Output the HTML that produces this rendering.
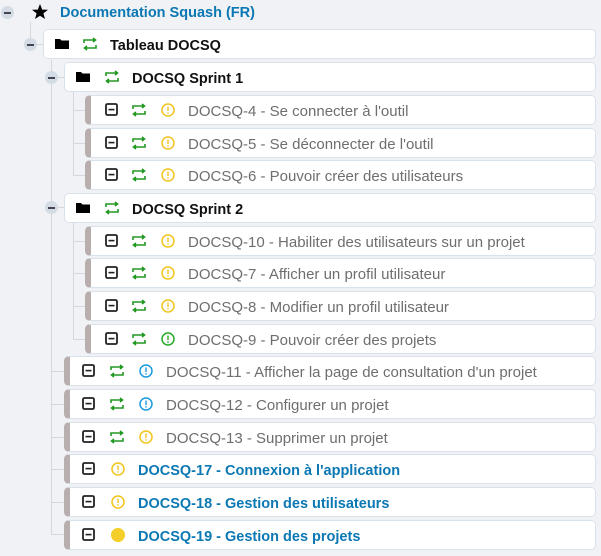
<!DOCTYPE html>
<html><head><meta charset="utf-8"><style>
*{margin:0;padding:0;box-sizing:border-box}
body{width:601px;height:556px;background:#f1f2f6;position:relative;overflow:hidden;font-family:"Segoe UI","Liberation Sans",sans-serif}
.c{position:absolute;height:30px;right:5px;background:#fff;border:1px solid #d9e2ea;border-radius:5px}
.c.g{border-left:6px solid #b8aeae}
.t{position:absolute;font-size:15px;line-height:18px;white-space:nowrap;color:#6e6e6e;margin-top:2px}
.b{font-weight:bold;color:#111;font-size:14.5px}
.bl{font-weight:bold;color:#0b78b3;font-size:14.5px}
.tg{position:absolute;width:13px;height:13px;border-radius:50%;background:#d3dce4}
.tg:after{content:"";position:absolute;left:3px;top:6px;width:7px;height:1.5px;background:#445}
.vl{position:absolute;width:1px;background:#d4d8dc}
.hl{position:absolute;height:1px;background:#d4d8dc}
svg{position:absolute}
</style></head><body>
<svg width="0" height="0" style="position:absolute">
<defs>
<g id="sq"><rect x="1" y="1" width="11" height="11" rx="1.5" fill="none" stroke="#222" stroke-width="1.8"/><rect x="3.5" y="5.8" width="6" height="1.6" fill="#222"/></g>
<g id="ar" fill="none" stroke="#229922" stroke-width="1.6"><path d="M1 6V3H12"/><path d="M10 1L12.5 3L10 5" fill="#229922"/><path d="M13 8V11H2"/><path d="M4 9L1.5 11L4 13" fill="#229922"/></g>
<g id="ey"><circle cx="7" cy="7" r="6" fill="none" stroke="#f2c31c" stroke-width="1.5"/><rect x="6.3" y="3.5" width="1.4" height="4.5" fill="#f2c31c"/><rect x="6.3" y="9.2" width="1.4" height="1.4" fill="#f2c31c"/></g>
<g id="eb"><circle cx="7" cy="7" r="6" fill="none" stroke="#1a9be0" stroke-width="1.5"/><rect x="6.3" y="3.5" width="1.4" height="4.5" fill="#1a9be0"/><rect x="6.3" y="9.2" width="1.4" height="1.4" fill="#1a9be0"/></g>
<g id="eg"><circle cx="7" cy="7" r="6" fill="none" stroke="#22aa22" stroke-width="1.5"/><rect x="6.3" y="3.5" width="1.4" height="4.5" fill="#22aa22"/><rect x="6.3" y="9.2" width="1.4" height="1.4" fill="#22aa22"/></g>
<g id="fo"><path d="M0 2H5L6.5 3.5H14V12H0Z" fill="#000"/></g>
</defs></svg>

<!-- lines -->
<div class="vl" style="left:30px;top:22px;height:16px"></div>
<div class="hl" style="left:36px;top:44px;width:7px"></div>
<div class="vl" style="left:51px;top:60px;height:475px"></div>
<div class="hl" style="left:57px;top:77px;width:7px"></div>
<div class="hl" style="left:57px;top:207px;width:7px"></div>
<div class="vl" style="left:73px;top:92px;height:84px"></div>
<div class="hl" style="left:73px;top:110px;width:12px"></div>
<div class="hl" style="left:73px;top:143px;width:12px"></div>
<div class="hl" style="left:73px;top:175px;width:12px"></div>
<div class="vl" style="left:73px;top:223px;height:116px"></div>
<div class="hl" style="left:73px;top:241px;width:12px"></div>
<div class="hl" style="left:73px;top:273px;width:12px"></div>
<div class="hl" style="left:73px;top:306px;width:12px"></div>
<div class="hl" style="left:73px;top:339px;width:12px"></div>
<div class="hl" style="left:51px;top:371px;width:13px"></div>
<div class="hl" style="left:51px;top:404px;width:13px"></div>
<div class="hl" style="left:51px;top:437px;width:13px"></div>
<div class="hl" style="left:51px;top:469px;width:13px"></div>
<div class="hl" style="left:51px;top:502px;width:13px"></div>
<div class="hl" style="left:51px;top:534px;width:13px"></div>

<div class="tg" style="left:1px;top:6px"></div>
<div class="tg" style="left:24px;top:38px"></div>
<div class="tg" style="left:45px;top:71px"></div>
<div class="tg" style="left:45px;top:201px"></div>

<svg style="left:31px;top:3px" width="18" height="18"><path d="M9 1L11.2 6.6L17 6.8L12.4 10.4L14 16L9 12.7L4 16L5.6 10.4L1 6.8L6.8 6.6Z" fill="#000"/></svg>
<div class="t bl" style="left:60px;top:2px;font-size:14.5px">Documentation Squash (FR)</div>

<!-- Tableau -->
<div class="c" style="left:43px;top:29px"></div>
<svg style="left:55px;top:37px" width="15" height="14"><use href="#fo"/></svg>
<svg style="left:83px;top:37px" width="15" height="15"><use href="#ar"/></svg>
<div class="t b" style="left:110px;top:35px">Tableau DOCSQ</div>

<!-- Sprint 1 -->
<div class="c" style="left:64px;top:62px"></div>
<svg style="left:76px;top:70px" width="15" height="14"><use href="#fo"/></svg>
<svg style="left:105px;top:70px" width="15" height="15"><use href="#ar"/></svg>
<div class="t b" style="left:132px;top:68px">DOCSQ Sprint 1</div>

<div class="c g" style="left:85px;top:95px"></div>
<svg style="left:105px;top:103px" width="14" height="14"><use href="#sq"/></svg>
<svg style="left:132px;top:103px" width="15" height="15"><use href="#ar"/></svg>
<svg style="left:161px;top:103px" width="14" height="14"><use href="#ey"/></svg>
<div class="t" style="left:188px;top:101px">DOCSQ-4 - Se connecter à l'outil</div>

<div class="c g" style="left:85px;top:128px"></div>
<svg style="left:105px;top:136px" width="14" height="14"><use href="#sq"/></svg>
<svg style="left:132px;top:136px" width="15" height="15"><use href="#ar"/></svg>
<svg style="left:161px;top:136px" width="14" height="14"><use href="#ey"/></svg>
<div class="t" style="left:188px;top:134px">DOCSQ-5 - Se déconnecter de l'outil</div>

<div class="c g" style="left:85px;top:160px"></div>
<svg style="left:105px;top:168px" width="14" height="14"><use href="#sq"/></svg>
<svg style="left:132px;top:168px" width="15" height="15"><use href="#ar"/></svg>
<svg style="left:161px;top:168px" width="14" height="14"><use href="#ey"/></svg>
<div class="t" style="left:188px;top:166px">DOCSQ-6 - Pouvoir créer des utilisateurs</div>

<!-- Sprint 2 -->
<div class="c" style="left:64px;top:193px"></div>
<svg style="left:76px;top:201px" width="15" height="14"><use href="#fo"/></svg>
<svg style="left:105px;top:201px" width="15" height="15"><use href="#ar"/></svg>
<div class="t b" style="left:132px;top:199px">DOCSQ Sprint 2</div>

<div class="c g" style="left:85px;top:226px"></div>
<svg style="left:105px;top:234px" width="14" height="14"><use href="#sq"/></svg>
<svg style="left:132px;top:234px" width="15" height="15"><use href="#ar"/></svg>
<svg style="left:161px;top:234px" width="14" height="14"><use href="#ey"/></svg>
<div class="t" style="left:188px;top:232px">DOCSQ-10 - Habiliter des utilisateurs sur un projet</div>

<div class="c g" style="left:85px;top:258px"></div>
<svg style="left:105px;top:266px" width="14" height="14"><use href="#sq"/></svg>
<svg style="left:132px;top:266px" width="15" height="15"><use href="#ar"/></svg>
<svg style="left:161px;top:266px" width="14" height="14"><use href="#ey"/></svg>
<div class="t" style="left:188px;top:264px">DOCSQ-7 - Afficher un profil utilisateur</div>

<div class="c g" style="left:85px;top:291px"></div>
<svg style="left:105px;top:299px" width="14" height="14"><use href="#sq"/></svg>
<svg style="left:132px;top:299px" width="15" height="15"><use href="#ar"/></svg>
<svg style="left:161px;top:299px" width="14" height="14"><use href="#ey"/></svg>
<div class="t" style="left:188px;top:297px">DOCSQ-8 - Modifier un profil utilisateur</div>

<div class="c g" style="left:85px;top:324px"></div>
<svg style="left:105px;top:332px" width="14" height="14"><use href="#sq"/></svg>
<svg style="left:132px;top:332px" width="15" height="15"><use href="#ar"/></svg>
<svg style="left:161px;top:332px" width="14" height="14"><use href="#eg"/></svg>
<div class="t" style="left:188px;top:330px">DOCSQ-9 - Pouvoir créer des projets</div>

<!-- top-level items -->
<div class="c g" style="left:64px;top:356px"></div>
<svg style="left:82px;top:364px" width="14" height="14"><use href="#sq"/></svg>
<svg style="left:110px;top:364px" width="15" height="15"><use href="#ar"/></svg>
<svg style="left:139px;top:364px" width="14" height="14"><use href="#eb"/></svg>
<div class="t" style="left:166px;top:362px">DOCSQ-11 - Afficher la page de consultation d'un projet</div>

<div class="c g" style="left:64px;top:389px"></div>
<svg style="left:82px;top:397px" width="14" height="14"><use href="#sq"/></svg>
<svg style="left:110px;top:397px" width="15" height="15"><use href="#ar"/></svg>
<svg style="left:139px;top:397px" width="14" height="14"><use href="#eb"/></svg>
<div class="t" style="left:166px;top:395px">DOCSQ-12 - Configurer un projet</div>

<div class="c g" style="left:64px;top:422px"></div>
<svg style="left:82px;top:430px" width="14" height="14"><use href="#sq"/></svg>
<svg style="left:110px;top:430px" width="15" height="15"><use href="#ar"/></svg>
<svg style="left:139px;top:430px" width="14" height="14"><use href="#ey"/></svg>
<div class="t" style="left:166px;top:428px">DOCSQ-13 - Supprimer un projet</div>

<div class="c g" style="left:64px;top:454px"></div>
<svg style="left:82px;top:462px" width="14" height="14"><use href="#sq"/></svg>
<svg style="left:111px;top:462px" width="14" height="14"><use href="#ey"/></svg>
<div class="t bl" style="left:138px;top:460px">DOCSQ-17 - Connexion à l'application</div>

<div class="c g" style="left:64px;top:487px"></div>
<svg style="left:82px;top:495px" width="14" height="14"><use href="#sq"/></svg>
<svg style="left:111px;top:495px" width="14" height="14"><use href="#ey"/></svg>
<div class="t bl" style="left:138px;top:493px">DOCSQ-18 - Gestion des utilisateurs</div>

<div class="c g" style="left:64px;top:520px"></div>
<svg style="left:82px;top:528px" width="14" height="14"><use href="#sq"/></svg>
<svg style="left:111px;top:528px" width="14" height="14"><circle cx="7" cy="7" r="7" fill="#f4cf2a"/></svg>
<div class="t bl" style="left:138px;top:526px">DOCSQ-19 - Gestion des projets</div>
</body></html>
